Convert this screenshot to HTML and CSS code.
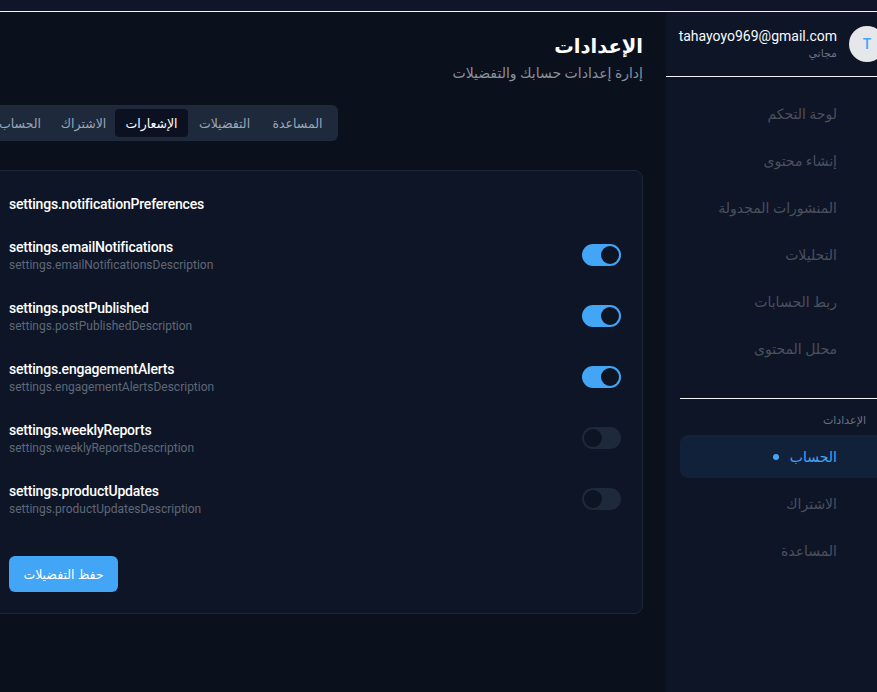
FILE: index.html
```html
<!DOCTYPE html>
<html lang="ar">
<head>
<meta charset="utf-8">
<title>الإعدادات</title>
<link rel="stylesheet" href="styles.css">
</head>
<body>
<div class="app">
  <header class="topbar"></header>
  <div class="layout">
    <main class="main">
      <div class="main-inner">
        <div class="page-head" dir="rtl">
          <h1 class="title">الإعدادات</h1>
          <p class="subtitle">إدارة إعدادات حسابك والتفضيلات</p>
        </div>
        <div class="tabs">
          <span class="tab tab-w64">الحساب</span>
          <span class="tab tab-w63">الاشتراك</span>
          <span class="tab tab-active">الإشعارات</span>
          <span class="tab">التفضيلات</span>
          <span class="tab">المساعدة</span>
        </div>
        <section class="card">
          <h2 class="card-title">settings.notificationPreferences</h2>
          <div class="rows">
            <div class="row">
              <div class="row-text">
                <div class="row-title">settings.emailNotifications</div>
                <div class="row-desc">settings.emailNotificationsDescription</div>
              </div>
              <span class="switch on"><span class="knob"></span></span>
            </div>
            <div class="row">
              <div class="row-text">
                <div class="row-title">settings.postPublished</div>
                <div class="row-desc">settings.postPublishedDescription</div>
              </div>
              <span class="switch on"><span class="knob"></span></span>
            </div>
            <div class="row">
              <div class="row-text">
                <div class="row-title">settings.engagementAlerts</div>
                <div class="row-desc">settings.engagementAlertsDescription</div>
              </div>
              <span class="switch on"><span class="knob"></span></span>
            </div>
            <div class="row">
              <div class="row-text">
                <div class="row-title">settings.weeklyReports</div>
                <div class="row-desc">settings.weeklyReportsDescription</div>
              </div>
              <span class="switch"><span class="knob"></span></span>
            </div>
            <div class="row">
              <div class="row-text">
                <div class="row-title">settings.productUpdates</div>
                <div class="row-desc">settings.productUpdatesDescription</div>
              </div>
              <span class="switch"><span class="knob"></span></span>
            </div>
          </div>
          <button class="save-btn" dir="rtl">حفظ التفضيلات</button>
        </section>
      </div>
    </main>
    <aside class="sidebar" dir="rtl">
      <div class="user">
        <div class="avatar">T</div>
        <div class="user-text">
          <div class="email">tahayoyo969@gmail.com</div>
          <div class="plan">مجاني</div>
        </div>
      </div>
      <nav class="nav">
        <a class="nav-item">لوحة التحكم</a>
        <a class="nav-item">إنشاء محتوى</a>
        <a class="nav-item">المنشورات المجدولة</a>
        <a class="nav-item">التحليلات</a>
        <a class="nav-item">ربط الحسابات</a>
        <a class="nav-item">محلل المحتوى</a>
        <div class="nav-section">
          <div class="nav-label">الإعدادات</div>
          <a class="nav-item active"><span>الحساب</span><span class="dot"></span></a>
          <a class="nav-item">الاشتراك</a>
          <a class="nav-item">المساعدة</a>
        </div>
      </nav>
    </aside>
  </div>
</div>
</body>
</html>
```
FILE: styles.css
```css
* { box-sizing: border-box; }
html, body {
  margin: 0;
  padding: 0;
  width: 877px;
  height: 692px;
  overflow: hidden;
  background: #0b101d;
  font-family: Roboto, "DejaVu Sans", sans-serif;
  color: #f1f5f9;
}
.app {
  width: 877px;
  height: 692px;
  display: flex;
  flex-direction: column;
}
.topbar {
  height: 12px;
  flex: none;
  background: #10152a;
  border-bottom: 1px solid #f1f5f9;
}
.layout {
  flex: 1;
  display: flex;
  min-height: 0;
}
.main {
  width: 666px;
  flex: none;
  overflow: hidden;
  background: #0b101d;
}
.main-inner {
  margin-left: -16px;
  margin-right: 23px;
  padding-top: 21px;
  display: flex;
  flex-direction: column;
}
.page-head { text-align: right; }
.title {
  margin: 0;
  font-size: 19.5px;
  line-height: 28px;
  font-weight: 700;
  color: #ffffff;
}
.subtitle {
  margin: 2px 0 0;
  font-size: 14px;
  line-height: 20px;
  color: #8a919e;
}
.tabs {
  align-self: flex-start;
  margin-top: 22px;
  display: flex;
  padding: 4px;
  height: 36px;
  background: #1e293b;
  border-radius: 6px;
}
.tab {
  width: 73px;
  height: 28px;
  display: flex;
  align-items: center;
  justify-content: center;
  font-size: 12.5px;
  color: #9aa6b8;
  border-radius: 4px;
}
.tab-w64 { width: 64px; }
.tab-w63 { width: 63px; }
.tab-active {
  background: #0b1120;
  color: #ffffff;
}
.card {
  margin-top: 29px;
  background: #0e1526;
  border: 1px solid #1e2738;
  border-radius: 8px;
  padding: 23px 21px 21px 24px;
  display: flex;
  flex-direction: column;
  align-items: flex-start;
}
.card-title {
  margin: 0;
  font-size: 14px;
  line-height: 20px;
  font-weight: 500;
  letter-spacing: -0.2px;
  color: #ffffff;
}
.rows {
  align-self: stretch;
  margin-top: 23px;
  display: flex;
  flex-direction: column;
  gap: 25px;
}
.row {
  height: 36px;
  display: flex;
  align-items: center;
  justify-content: space-between;
}
.row-title {
  font-size: 14px;
  line-height: 20px;
  font-weight: 500;
  letter-spacing: -0.2px;
  color: #ffffff;
}
.row-desc {
  font-size: 12px;
  line-height: 16px;
  color: #5f6877;
}
.switch {
  width: 39px;
  height: 22px;
  border-radius: 11px;
  background: #1e293b;
  display: flex;
  align-items: center;
  padding: 2px;
  flex: none;
}
.switch.on {
  background: #42a5f5;
  justify-content: flex-end;
}
.knob {
  width: 18px;
  height: 18px;
  border-radius: 50%;
  background: #0d1424;
}
.save-btn {
  margin-top: 39px;
  width: 109px;
  height: 36px;
  border: none;
  border-radius: 6px;
  background: #42a5f5;
  color: #ffffff;
  font-family: Roboto, "DejaVu Sans", sans-serif;
  font-size: 12.5px;
}
.sidebar {
  width: 211px;
  flex: none;
  background: #0e1527;
  overflow: hidden;
}
.user {
  height: 65px;
  border-bottom: 1px solid #f1f5f9;
  display: flex;
  align-items: center;
  gap: 12px;
  margin-right: -8px;
}
.avatar {
  width: 36px;
  height: 36px;
  flex: none;
  border-radius: 50%;
  background: #e5e7eb;
  color: #42a5f5;
  font-size: 14px;
  font-weight: 500;
  display: flex;
  align-items: center;
  justify-content: center;
}
.user-text { text-align: right; }
.email {
  font-size: 14px;
  line-height: 20px;
  color: #f8fafc;
  direction: ltr;
}
.plan {
  font-size: 11px;
  line-height: 16px;
  color: #6b7280;
}
.nav {
  padding: 15px 0 0 14px;
  display: flex;
  flex-direction: column;
  gap: 4px;
}
.nav-item {
  height: 43px;
  padding-right: 40px;
  display: flex;
  align-items: center;
  gap: 11px;
  font-size: 14px;
  color: #4a505c;
}
.nav-section {
  margin-top: 24px;
  border-top: 1px solid #f1f5f9;
  display: flex;
  flex-direction: column;
  gap: 4px;
}
.nav-label {
  padding: 14px 11px 0 0;
  font-size: 11px;
  line-height: 16px;
  color: #6b7280;
}
.nav-item.active {
  margin-top: 2px;
  margin-right: -10px;
  padding-right: 50px;
  background: #12213a;
  border-radius: 8px;
  color: #42a5f5;
}
.dot {
  width: 6px;
  height: 6px;
  border-radius: 50%;
  background: #42a5f5;
}
```
